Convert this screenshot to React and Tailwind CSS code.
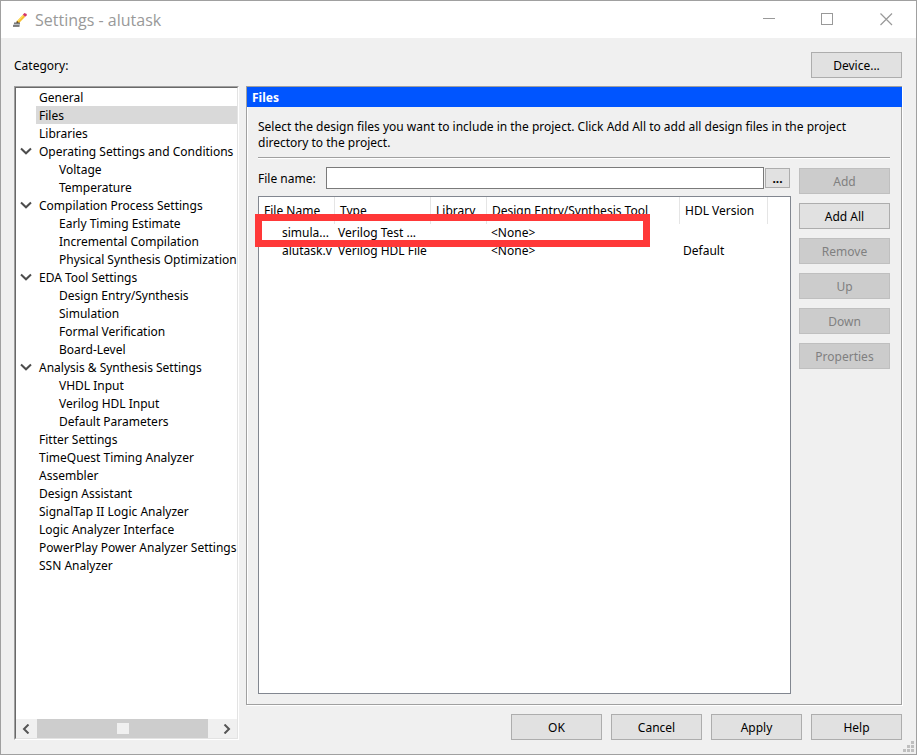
import React, { useState } from 'react';
import clsx from 'clsx';

const CATEGORIES = [
  { name: 'General' },
  { name: 'Files' },
  { name: 'Libraries' },
  {
    name: 'Operating Settings and Conditions',
    children: ['Voltage', 'Temperature'],
  },
  {
    name: 'Compilation Process Settings',
    children: ['Early Timing Estimate', 'Incremental Compilation', 'Physical Synthesis Optimization'],
  },
  {
    name: 'EDA Tool Settings',
    children: ['Design Entry/Synthesis', 'Simulation', 'Formal Verification', 'Board-Level'],
  },
  {
    name: 'Analysis & Synthesis Settings',
    children: ['VHDL Input', 'Verilog HDL Input', 'Default Parameters'],
  },
  { name: 'Fitter Settings' },
  { name: 'TimeQuest Timing Analyzer' },
  { name: 'Assembler' },
  { name: 'Design Assistant' },
  { name: 'SignalTap II Logic Analyzer' },
  { name: 'Logic Analyzer Interface' },
  { name: 'PowerPlay Power Analyzer Settings' },
  { name: 'SSN Analyzer' },
];

const COLUMNS = [
  { name: 'File Name', width: 'w-[76px]' },
  { name: 'Type', width: 'w-[96px]' },
  { name: 'Library', width: 'w-[56px]' },
  { name: 'Design Entry/Synthesis Tool', width: 'w-[193px]' },
  { name: 'HDL Version', width: 'w-[88px]' },
];

const FILES = [
  { name: 'simula...', type: 'Verilog Test ...', library: '', tool: '<None>', version: '' },
  { name: 'alutask.v', type: 'Verilog HDL File', library: '', tool: '<None>', version: 'Default' },
];

const FILE_ACTIONS = [
  { label: 'Add', disabled: true },
  { label: 'Add All' },
  { label: 'Remove', disabled: true },
  { label: 'Up', disabled: true },
  { label: 'Down', disabled: true },
  { label: 'Properties', disabled: true },
];

function PushButton({ children, disabled }) {
  return (
    <button
      type="button"
      disabled={disabled}
      className={clsx(
        'h-[26px] w-[91px] shrink-0 border pt-0.5 text-center',
        disabled
          ? 'border-[#bfbfbf] bg-[#cccccc] text-[#808080]'
          : 'border-[#adadad] bg-[#e1e1e1] text-black hover:bg-[#e5f1fb]'
      )}
    >
      {children}
    </button>
  );
}

function PencilIcon() {
  return (
    <svg width="14" height="14" viewBox="0 0 14 14" aria-hidden="true">
      <path d="M4 8 L10 1.8 L12.2 3.8 L6.4 9.8 L4 10 Z" fill="#f7bf2f" />
      <path d="M4.4 7.8 L10 1.8 L10.9 2.6 L5.2 8.6 Z" fill="#ffe066" />
      <path d="M9.8 1.8 L11.4 0 L13.8 1 L13.6 2.6 L12.2 3.8 Z" fill="#d4356b" />
      <path d="M3.8 7.8 L5.6 9.4 L3.4 10 Z" fill="#5a3a1a" />
      <path d="M1 9.6 H7 V10.8 H1 Z" fill="#444" />
      <path d="M0.5 10.8 H7 V12.4 H0.5 Z" fill="#b8bcc2" />
      <path d="M0 12.4 H6.5 V13.6 H0 Z" fill="#333" />
    </svg>
  );
}

function TitleBar() {
  return (
    <header className="flex h-[37px] shrink-0 items-center bg-white pl-3">
      <PencilIcon />
      <h1 className="ml-2 flex-1 font-['Open_Sans','Noto_Sans',sans-serif] text-base text-[#999999]">
        Settings - alutask
      </h1>
      <button type="button" aria-label="Minimize" className="flex h-full w-[58px] items-center justify-center">
        <svg width="13" height="13" viewBox="0 0 13 13" shapeRendering="crispEdges">
          <path d="M0 5.5H12" stroke="#999" />
        </svg>
      </button>
      <button type="button" aria-label="Maximize" className="flex h-full w-[58px] items-center justify-center">
        <svg width="13" height="13" viewBox="0 0 13 13" fill="none" shapeRendering="crispEdges">
          <rect x="0.5" y="0.5" width="11" height="11" stroke="#999" />
        </svg>
      </button>
      <button type="button" aria-label="Close" className="flex h-full w-[60px] items-center justify-center">
        <svg width="13" height="13" viewBox="0 0 13 13" fill="none">
          <path d="M0.5 0.5L12 12M12 0.5L0.5 12" stroke="#999" strokeWidth="1.2" />
        </svg>
      </button>
    </header>
  );
}

function TreeRow({ name, child, open, onToggle, selected, onSelect }) {
  return (
    <div className={clsx('flex h-[18px] items-center', child ? 'pl-10' : 'pl-5')}>
      {onToggle && (
        <button
          type="button"
          aria-label={`Toggle ${name}`}
          aria-expanded={open}
          onClick={onToggle}
          className="-ml-5 flex h-full w-5 shrink-0 items-center justify-center"
        >
          <svg
            width="12"
            height="8"
            viewBox="0 0 12 8"
            fill="none"
            className={open ? '' : '-rotate-90'}
          >
            <path d="M1 1.5L6 6.3L11 1.5" stroke="#4d4d4d" strokeWidth="2" />
          </svg>
        </button>
      )}
      <button
        type="button"
        onClick={onSelect}
        className={clsx('h-full flex-1 pt-0.5 pl-[3px] text-left whitespace-nowrap', selected && 'bg-[#d9d9d9]')}
      >
        {name}
      </button>
    </div>
  );
}

function CategoryTree({ selected, onSelect }) {
  const [closed, setClosed] = useState([]);

  const toggle = name =>
    setClosed(list => (list.includes(name) ? list.filter(n => n !== name) : [...list, name]));

  return (
    <nav
      aria-labelledby="category-label"
      className="flex w-[225px] shrink-0 flex-col border border-t-[#a0a0a0] border-r-white border-b-white border-l-[#a0a0a0]"
    >
      <div className="flex flex-1 flex-col border border-t-[#696969] border-r-[#e3e3e3] border-b-[#e3e3e3] border-l-[#696969] bg-white">
        <ul className="flex-1 overflow-hidden">
          {CATEGORIES.map(({ name, children }) => {
            const open = !closed.includes(name);
            return (
              <li key={name}>
                <TreeRow
                  name={name}
                  open={open}
                  onToggle={children && (() => toggle(name))}
                  selected={selected === name}
                  onSelect={() => onSelect(name)}
                />
                {children && open && (
                  <ul>
                    {children.map(child => (
                      <li key={child}>
                        <TreeRow
                          name={child}
                          child
                          selected={selected === child}
                          onSelect={() => onSelect(child)}
                        />
                      </li>
                    ))}
                  </ul>
                )}
              </li>
            );
          })}
        </ul>
        <div className="flex h-[19px] shrink-0 bg-[#f0f0f0]">
          <button type="button" aria-label="Scroll left" className="flex w-[21px] items-center justify-center">
            <svg width="10" height="10" viewBox="0 0 10 10" fill="none">
              <path d="M6.5 0.5L2 5L6.5 9.5" stroke="#555" strokeWidth="2" />
            </svg>
          </button>
          <div className="flex flex-1 items-center justify-center bg-[#cdcdcd]">
            <span className="h-[11px] w-3 bg-[#f0f0f0]" />
          </div>
          <button type="button" aria-label="Scroll right" className="ml-[9px] flex w-5 items-center justify-center">
            <svg width="8" height="10" viewBox="0 0 8 10" fill="none">
              <path d="M1.5 0.5L6 5L1.5 9.5" stroke="#555" strokeWidth="2" />
            </svg>
          </button>
        </div>
      </div>
    </nav>
  );
}

function FileTable() {
  return (
    <div className="relative flex-1 border border-[#828790] bg-white">
      <table className="w-full table-fixed border-separate border-spacing-0 text-left">
        <thead>
          <tr className="h-[27px]">
            {COLUMNS.map(({ name, width }) => (
              <th
                key={name}
                scope="col"
                className={clsx('border-r border-[#e5e5e5] p-0 pl-[5px] font-normal whitespace-nowrap', width)}
              >
                {name}
              </th>
            ))}
            <td />
          </tr>
        </thead>
        <tbody>
          {FILES.map(file => (
            <tr key={file.name} className="h-[18px] whitespace-nowrap">
              <td className="p-0 pl-[23px]">{file.name}</td>
              <td className="p-0 pl-[3px]">{file.type}</td>
              <td className="p-0 pl-[3px]">{file.library}</td>
              <td className="p-0 pl-1">{file.tool}</td>
              <td className="p-0 pl-[3px]">{file.version}</td>
              <td />
            </tr>
          ))}
        </tbody>
      </table>
      {/* callout around the test bench row */}
      <div className="pointer-events-none absolute top-[17px] -left-1 h-[33px] w-[395px] border-[7px] border-[#ff3838]" />
    </div>
  );
}

function FilesPanel() {
  return (
    <section className="flex flex-1 flex-col border border-[#a0a0a0] shadow-[1px_1px_0_#fff,inset_1px_0_0_#fff]">
      <h2 className="-mr-px h-5 shrink-0 bg-[#0055ff] pl-[5px] leading-[22px] font-bold text-white">Files</h2>
      <div className="flex flex-1 flex-col px-[11px] pt-3 pb-2.5">
        <p className="pr-5 leading-4">
          Select the design files you want to include in the project. Click Add All to add all design files in the
          project directory to the project.
        </p>
        <hr className="mt-1.5 border-[#a0a0a0] shadow-[0_1px_0_#fff]" />
        <div className="mt-[9px] flex flex-1 gap-2">
          <div className="flex flex-1 flex-col gap-[7px]">
            <div className="flex h-[22px] items-center pr-px">
              <label htmlFor="file-name" className="w-[68px] shrink-0 pt-0.5">
                File name:
              </label>
              <input
                id="file-name"
                type="text"
                className="h-full min-w-0 flex-1 border border-[#7a7a7a] bg-white px-1 outline-none"
              />
              <button
                type="button"
                aria-label="Browse"
                className="ml-px flex h-5 w-[25px] items-center justify-center border border-[#adadad] bg-[#e1e1e1] pt-0.5 font-bold"
              >
                ...
              </button>
            </div>
            <FileTable />
          </div>
          <div className="flex flex-col gap-[9px] pt-px">
            {FILE_ACTIONS.map(({ label, disabled }) => (
              <PushButton key={label} disabled={disabled}>
                {label}
              </PushButton>
            ))}
          </div>
        </div>
      </div>
    </section>
  );
}

function ResizeGrip() {
  const dots = [[8, 0], [4, 4], [8, 4], [0, 8], [4, 8], [8, 8]];
  return (
    <svg width="11" height="11" viewBox="0 0 11 11" className="absolute right-0.5 bottom-0.5" aria-hidden="true">
      {dots.map(([x, y]) => (
        <rect key={`${x}-${y}`} x={x} y={y} width="3" height="3" fill="#bfbfbf" />
      ))}
    </svg>
  );
}

export default function App() {
  const [selected, setSelected] = useState('Files');

  return (
    <div className="relative flex min-h-screen flex-col border border-[#a0a0a0] bg-[#f0f0f0] font-['Noto_Sans','Open_Sans',sans-serif] text-xs text-black">
      <TitleBar />
      <main className="flex flex-1 flex-col gap-2 pt-3.5 pr-3.5 pb-3.5 pl-[13px]">
        <div className="flex items-center justify-between">
          <span id="category-label" className="pt-0.5">
            Category:
          </span>
          <PushButton>Device...</PushButton>
        </div>
        <div className="flex flex-1 gap-[7px]">
          <CategoryTree selected={selected} onSelect={setSelected} />
          <div className="flex flex-1 flex-col gap-[9px]">
            <FilesPanel />
            <div className="flex justify-end gap-[9px]">
              <PushButton>OK</PushButton>
              <PushButton>Cancel</PushButton>
              <PushButton>Apply</PushButton>
              <PushButton>Help</PushButton>
            </div>
          </div>
        </div>
      </main>
      <ResizeGrip />
    </div>
  );
}
